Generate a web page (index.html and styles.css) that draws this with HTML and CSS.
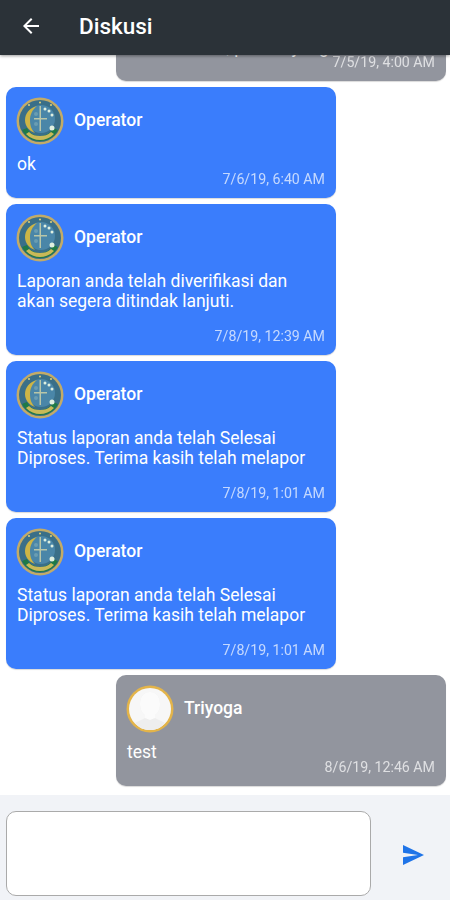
FILE: index.html
```html
<!DOCTYPE html>
<html lang="id">
<head>
  <meta charset="UTF-8" />
  <meta name="viewport" content="width=device-width, initial-scale=1.0"/>
  <title>Diskusi</title>
  <link rel="stylesheet" href="styles.css">
</head>
<body>
  <!-- Avatar operator dan pengguna -->
  <svg class="defs" width="0" height="0">
    <symbol id="emblem" viewBox="0 0 48 48">
      <circle cx="24" cy="24" r="23.500" fill="#c2ab68"/>
      <circle cx="24" cy="24" r="21" fill="#3a6f88"/>
      <circle cx="25" cy="22" r="14" fill="#4a86a8"/>
      <path d="M6 33c4 8 11 11 18 11s14-3 18-11l-5-2c-3 6-8 8-13 8s-10-2-13-8z" fill="#1f7a46"/>
      <path d="M10 37c4 4 9 6 14 6s10-2 14-6l-3-2c-3 3-7 4-11 4s-8-1-11-4z" fill="#c9b958"/>
      <path d="M21 9c-8 2-12 8-12 14s4 11 10 13c-4-4-5-8-5-13s2-10 7-14z" fill="#cdb545"/>
      <path d="M23.500 9h1.500v25h-1.500z" fill="#b9c6a8"/>
      <path d="M18 21h13v1.500H18z" fill="#b9c6a8"/>
      <circle cx="20" cy="17" r="2" fill="#6a9db2"/>
      <circle cx="20" cy="27" r="2" fill="#6a9db2"/>
      <circle cx="29" cy="12" r="1.500" fill="#dff0e0"/>
      <circle cx="33" cy="14" r="1.500" fill="#dff0e0"/>
      <circle cx="36" cy="18" r="1.500" fill="#dff0e0"/>
      <circle cx="36" cy="31" r="2.500" fill="#dff0e0"/>
      <circle cx="13" cy="8" r="1" fill="#e2d27a"/>
      <circle cx="24" cy="5.500" r="1" fill="#e2d27a"/>
      <circle cx="35" cy="8" r="1" fill="#e2d27a"/>
    </symbol>
    <symbol id="user" viewBox="0 0 48 48">
      <circle cx="24" cy="24" r="23.500" fill="#e3b44a"/>
      <circle cx="24" cy="24" r="21" fill="#f7f7f7"/>
      <path d="M24 7c-7 0-10 6-10 12 0 5 2 9 5 11v3c-3 2-7 3-10 5 4 5 9 7 15 7s11-2 15-7c-3-2-7-3-10-5v-3c3-2 5-6 5-11 0-6-3-12-10-12z" fill="#eeeeee"/>
      <path d="M24 7c-7 0-10 6-10 12 0 5 2 9 5 11v3l5 2 5-2v-3c3-2 5-6 5-11 0-6-3-12-10-12z" fill="#fbfbfb"/>
    </symbol>
  </svg>

  <header class="topbar">
    <svg class="back-icon" width="24" height="24" viewBox="0 0 24 24">
      <path d="M20 11H7.830l5.590-5.590L12 4l-8 8 8 8 1.410-1.410L7.830 13H20z" fill="#fff"/>
    </svg>
    <h1 class="topbar-title">Diskusi</h1>
  </header>

  <main class="chat">
    <!-- Pesan terpotong oleh header -->
    <div class="msg msg-user msg-short">
      <p class="msg-text">Terima kasih, proses yang</p>
      <div class="msg-time">7/5/19, 4:00 AM</div>
    </div>

    <div class="msg msg-op msg-short">
      <div class="msg-head">
        <svg class="avatar"><use href="#emblem"/></svg>
        <span class="msg-name">Operator</span>
      </div>
      <p class="msg-text">ok</p>
      <div class="msg-time">7/6/19, 6:40 AM</div>
    </div>

    <div class="msg msg-op">
      <div class="msg-head">
        <svg class="avatar"><use href="#emblem"/></svg>
        <span class="msg-name">Operator</span>
      </div>
      <p class="msg-text">Laporan anda telah diverifikasi dan<br>akan segera ditindak lanjuti.</p>
      <div class="msg-time">7/8/19, 12:39 AM</div>
    </div>

    <div class="msg msg-op">
      <div class="msg-head">
        <svg class="avatar"><use href="#emblem"/></svg>
        <span class="msg-name">Operator</span>
      </div>
      <p class="msg-text">Status laporan anda telah Selesai<br>Diproses. Terima kasih telah melapor</p>
      <div class="msg-time">7/8/19, 1:01 AM</div>
    </div>

    <div class="msg msg-op">
      <div class="msg-head">
        <svg class="avatar"><use href="#emblem"/></svg>
        <span class="msg-name">Operator</span>
      </div>
      <p class="msg-text">Status laporan anda telah Selesai<br>Diproses. Terima kasih telah melapor</p>
      <div class="msg-time">7/8/19, 1:01 AM</div>
    </div>

    <div class="msg msg-user msg-short">
      <div class="msg-head">
        <svg class="avatar"><use href="#user"/></svg>
        <span class="msg-name">Triyoga</span>
      </div>
      <p class="msg-text">test</p>
      <div class="msg-time">8/6/19, 12:46 AM</div>
    </div>
  </main>

  <footer class="composer">
    <textarea class="composer-input"></textarea>
    <button class="send-btn" type="button">
      <svg width="21" height="20" viewBox="2 3 21 18" preserveAspectRatio="none">
        <path d="M2.010 21L23 12 2.010 3 2 10l15 2-15 2z" fill="#1f74e8"/>
      </svg>
    </button>
  </footer>
</body>
</html>
```

FILE: styles.css
```css
html, body {
  height: 100%;
}
body {
  margin: 0;
  display: flex;
  flex-direction: column;
  overflow: hidden;
  font-family: Roboto, sans-serif;
  background: #fff;
}
.defs {
  position: absolute;
}

/* Barre du haut */
.topbar {
  flex: none;
  height: 55px;
  display: flex;
  align-items: center;
  padding-left: 19px;
  background: #2b3238;
  box-shadow: 0 1px 3px rgba(0, 0, 0, .4);
  position: relative;
  z-index: 1;
}
.back-icon {
  margin-top: -3px;
}
.topbar-title {
  margin: -3px 0 0 36px;
  font-size: 22.5px;
  font-weight: 500;
  color: #fff;
}

/* Messages */
.chat {
  flex: 1;
  min-height: 0;
  display: flex;
  flex-direction: column;
  justify-content: flex-end;
  gap: 5.5px;
  padding: 0 4px 9px 6px;
  overflow: hidden;
}
.msg {
  flex: none;
  width: 330px;
  box-sizing: border-box;
  padding: 10px 11px 11px 10px;
  border-radius: 10px;
  color: #fff;
  box-shadow: 0 1px 1px rgba(0, 0, 0, .15);
}
.msg-op {
  background: #3a7dfc;
}
.msg-user {
  align-self: flex-end;
  background: #92959e;
}
.msg-head {
  display: flex;
  align-items: center;
  gap: 10px;
}
.avatar {
  width: 48px;
  height: 48px;
  filter: blur(.4px);
}
.msg-name {
  font-size: 17.500px;
  font-weight: 500;
  margin-top: -2px;
}
.msg-text {
  margin: 9px 0 16.500px 1px;
  font-size: 17.500px;
  line-height: 20.500px;
}
.msg-short .msg-text {
  margin-bottom: -3.100px;
}
.msg-time {
  text-align: right;
  font-size: 14.200px;
  line-height: 16px;
  opacity: .7;
}

/* Zone de saisie */
.composer {
  flex: none;
  height: 105px;
  box-sizing: border-box;
  display: flex;
  align-items: flex-start;
  padding: 16px 0 0 6px;
  background: #f1f3f7;
}
.composer-input {
  width: 365px;
  height: 85px;
  box-sizing: border-box;
  margin: 0;
  border: 1px solid #aaa;
  border-radius: 10px;
  background: #fff;
  resize: none;
}
.send-btn {
  margin: 34px 0 0 32px;
  padding: 0;
  border: 0;
  background: transparent;
  line-height: 0;
}
```
